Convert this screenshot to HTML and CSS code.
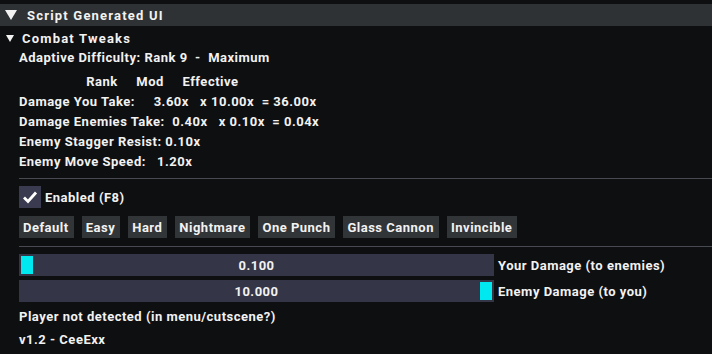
FILE: index.html
```html
<!DOCTYPE html>
<html lang="en">
<head>
    <meta charset="UTF-8">
    <title>Script Generated UI</title>
    <link rel="stylesheet" href="styles.css">
</head>
<body>
    <div class="window">
        <div class="header">
            <svg class="arrow" width="12" height="10" viewBox="0 0 12 10"><polygon points="0,0 12,0 6,10" fill="#f2f2f2"/></svg>
            <span class="wide">Script Generated UI</span>
        </div>
        <div class="node">
            <svg class="arrow-sm" width="8" height="7" viewBox="0 0 8 7"><polygon points="0,0 8,0 4,7" fill="#f2f2f2"/></svg>
            <span class="wide">Combat Tweaks</span>
        </div>
        <div class="content">
            <div class="line title">Adaptive Difficulty: Rank 9  -  Maximum</div>
            <div class="line">                  Rank     Mod     Effective</div>
            <div class="line">Damage You Take:     3.60x   x 10.00x  = 36.00x</div>
            <div class="line">Damage Enemies Take:  0.40x   x 0.10x  = 0.04x</div>
            <div class="line">Enemy Stagger Resist: 0.10x</div>
            <div class="line">Enemy Move Speed:   1.20x</div>

            <div class="sep first"></div>

            <label class="check">
                <span class="box">
                    <svg width="16" height="14" viewBox="0 0 16 14"><polyline points="2,7.5 6,11.5 14,2.5" fill="none" stroke="#fff" stroke-width="2.8"/></svg>
                </span>
                <span>Enabled (F8)</span>
            </label>

            <div class="presets">
                <button>Default</button>
                <button>Easy</button>
                <button>Hard</button>
                <button>Nightmare</button>
                <button>One Punch</button>
                <button>Glass Cannon</button>
                <button>Invincible</button>
            </div>

            <div class="sep"></div>

            <div class="slider-row">
                <div class="slider start"><span class="grab"></span><span class="val">0.100</span></div>
                <span class="slider-label">Your Damage (to enemies)</span>
            </div>
            <div class="slider-row">
                <div class="slider end"><span class="val">10.000</span><span class="grab"></span></div>
                <span class="slider-label">Enemy Damage (to you)</span>
            </div>

            <div class="line status">Player not detected (in menu/cutscene?)</div>
            <div class="line version">v1.2 - CeeExx</div>
        </div>
    </div>
</body>
</html>
```

FILE: styles.css
```css
body {
    margin: 0;
    background-color: #0e0f11;
    color: #f2f2f2;
    font-family: Roboto, "Liberation Sans", sans-serif;
    font-weight: 700;
    font-size: 13px;
    letter-spacing: 0.5px;
    height: 354px;
    overflow: hidden;
}
.window { padding-top: 4px; }
.wide { letter-spacing: 1.2px; }
.header {
    height: 22px;
    background: #2f3234;
    display: flex;
    align-items: center;
    padding-left: 5px;
    gap: 10px;
}
.node {
    height: 20px;
    margin-top: 2px;
    display: flex;
    align-items: center;
    padding-left: 6px;
    gap: 8px;
}
.content { padding-left: 19px; }
.line { height: 20px; line-height: 20px; white-space: pre; }
.title { margin-bottom: 4px; }
.sep { height: 1px; background: #484a52; margin: 8px 0 7px; }
.sep.first { margin: 6px 0 7px; }

.check { display: flex; align-items: center; gap: 4px; height: 22px; }
.check .box {
    width: 22px;
    height: 22px;
    background: #3a3a50;
    display: flex;
    align-items: center;
    justify-content: center;
}
.presets { display: flex; gap: 8px; margin-top: 8px; }
.presets button {
    height: 22px;
    padding: 0 5px 0 4px;
    border: none;
    border-radius: 0;
    background: #323538;
    color: #f2f2f2;
    font: inherit;
    letter-spacing: inherit;
}

.slider-row { display: flex; align-items: center; gap: 4px; margin-bottom: 4px; }
.slider {
    width: 475px;
    height: 22px;
    background: #353548;
    position: relative;
    display: flex;
    align-items: center;
    justify-content: center;
}
.slider .grab {
    position: absolute;
    top: 2px;
    width: 12px;
    height: 18px;
    background: #00e8f0;
}
.slider.start .grab { left: 2px; }
.slider.end .grab { right: 2px; }
.status { margin-top: 5px; margin-bottom: 3px; }
```
